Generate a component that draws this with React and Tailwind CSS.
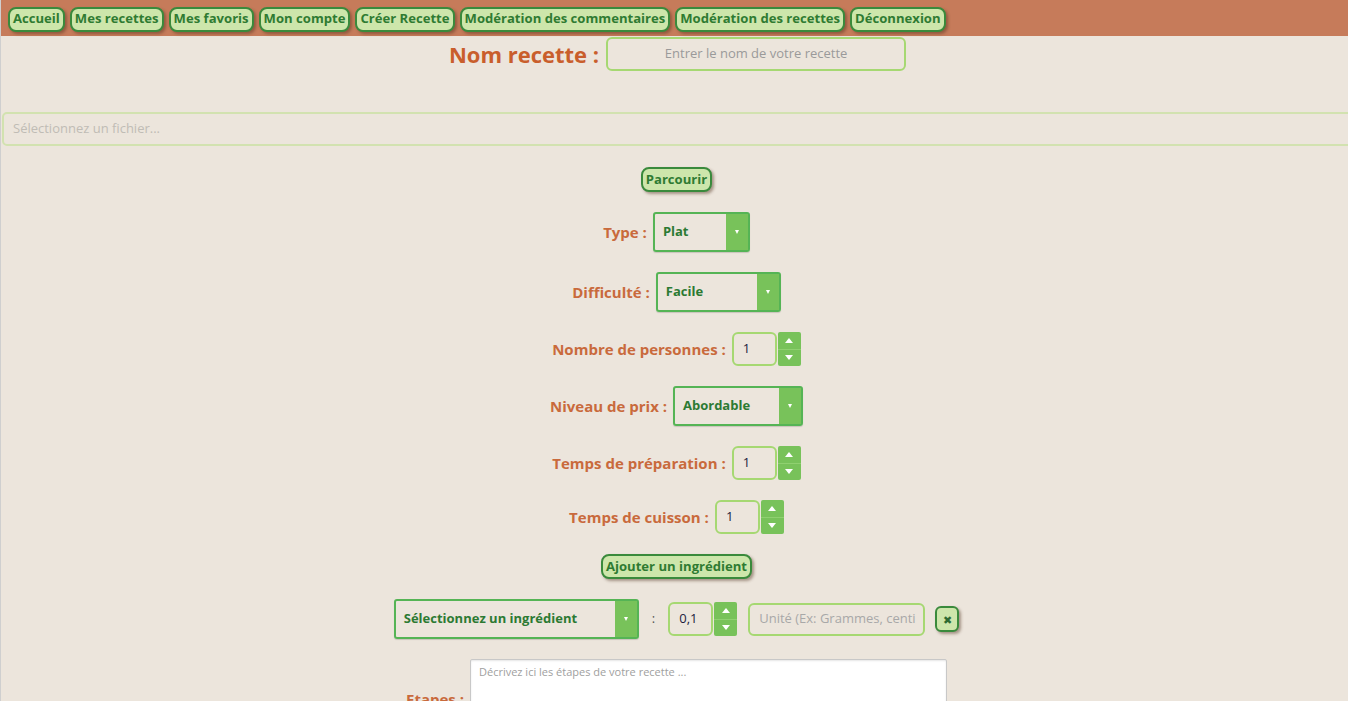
import React from 'react';

const font = { fontFamily: '"Open Sans", "Liberation Sans", sans-serif' };

const navItems = [
  'Accueil',
  'Mes recettes',
  'Mes favoris',
  'Mon compte',
  'Créer Recette',
  'Modération des commentaires',
  'Modération des recettes',
  'Déconnexion',
];

const GreenButton = ({ children, className = '' }) => (
  <button
    className={`h-[25px] px-[3px] rounded-[8px] border-2 border-[#3a8a3c] bg-[#cde6ab] text-[#2f7b32] text-[13.1px] font-bold leading-none shadow-[2px_2px_3px_rgba(80,50,30,0.45)] whitespace-nowrap ${className}`}
  >
    {children}
  </button>
);

const Label = ({ children }) => (
  <span className="text-[15px] font-bold text-[#c96a3c] whitespace-nowrap">{children}</span>
);

const FakeSelect = ({ value, width }) => (
  <div
    className="flex h-[40px] border-2 border-[#55b455] rounded-[3px] shadow-[0_1px_1px_rgba(0,0,0,0.15)]"
    style={{ width }}
  >
    <div className="flex-1 flex items-center pl-[8px] text-[13px] font-bold text-[#2c7a33]">{value}</div>
    <div className="w-[22px] bg-[#78c25a] flex items-center justify-center">
      <span className="w-0 h-0 border-l-[2.5px] border-r-[2.5px] border-t-[4px] border-l-transparent border-r-transparent border-t-white" />
    </div>
  </div>
);

const Spinner = () => (
  <div className="w-[23px] h-[34px] bg-[#78c25a] rounded-[2px] flex flex-col">
    <div className="flex-1 flex items-center justify-center border-b border-[#8fd070]">
      <span className="w-0 h-0 border-l-[4px] border-r-[4px] border-b-[5px] border-l-transparent border-r-transparent border-b-white" />
    </div>
    <div className="flex-1 flex items-center justify-center">
      <span className="w-0 h-0 border-l-[4px] border-r-[4px] border-t-[5px] border-l-transparent border-r-transparent border-t-white" />
    </div>
  </div>
);

const NumberField = ({ value }) => (
  <div className="flex items-center gap-px">
    <div className="w-[45px] h-[34px] border-2 border-[#a6d872] rounded-[6px] flex items-center pl-[9px] text-[13px] text-[#1c1c3c]">
      {value}
    </div>
    <Spinner />
  </div>
);

const Row = ({ label, children }) => (
  <div className="flex items-center justify-center gap-[6px]">
    <Label>{label}</Label>
    {children}
  </div>
);

export default function App() {
  return (
    <div className="min-h-screen bg-[#ece5dc] border-l border-[#cfcfcf] pb-10" style={font}>
      <nav className="h-[36px] bg-[#c67b5a] flex items-center gap-[5px] pl-[7px] pt-[2px]">
        {navItems.map((item) => (
          <GreenButton key={item}>{item}</GreenButton>
        ))}
      </nav>

      <div className="flex items-center justify-center gap-[7px] pl-[6px] pt-px">
        <span className="text-[22px] font-bold text-[#c95e2c]">Nom recette :</span>
        <div className="w-[300px] h-[34px] border-2 border-[#a6d872] rounded-[6px] flex items-center justify-center text-[13px] text-[#9a9a9a]">
          Entrer le nom de votre recette
        </div>
      </div>

      <div className="overflow-hidden mt-[41px]">
        <div className="ml-px w-[calc(100%+10px)] h-[34px] border-2 border-[#d2e2b0] rounded-[5px] flex items-center pl-[9px] text-[13px] text-[#c0bcb5]">
          Sélectionnez un fichier...
        </div>
      </div>

      <div className="flex flex-col items-center gap-[20px] mt-[21px] pl-[4px]">
        <GreenButton>Parcourir</GreenButton>
        <Row label="Type :">
          <FakeSelect value="Plat" width={97} />
        </Row>
        <Row label="Difficulté :">
          <FakeSelect value="Facile" width={125} />
        </Row>
        <Row label="Nombre de personnes :">
          <NumberField value="1" />
        </Row>
        <Row label="Niveau de prix :">
          <FakeSelect value="Abordable" width={130} />
        </Row>
        <Row label="Temps de préparation :">
          <NumberField value="1" />
        </Row>
        <Row label="Temps de cuisson :">
          <NumberField value="1" />
        </Row>
        <GreenButton>Ajouter un ingrédient</GreenButton>

        <div className="flex items-center">
          <FakeSelect value="Sélectionnez un ingrédient" width={245} />
          <span className="mx-[13px] text-[13px] text-[#555]">:</span>
          <NumberField value="0,1" />
          <div className="ml-[11px] w-[177px] h-[33px] border-2 border-[#a6d872] rounded-[6px] flex items-center pl-[9px] text-[13px] text-[#a8a8a8] whitespace-nowrap overflow-hidden">
            Unité (Ex: Grammes, centi
          </div>
          <button className="ml-[10px] w-[24px] h-[26px] rounded-[6px] border-2 border-[#3a8a3c] bg-[#cde6ab] text-[#2f6b32] text-[11px] leading-none flex items-center justify-center shadow-[2px_2px_3px_rgba(80,50,30,0.45)]">
            ✖
          </button>
        </div>

        <div className="flex items-center gap-[6px]">
          <Label>Etapes :</Label>
          <div className="w-[477px] h-[80px] bg-white border border-[#c8c8c8] rounded-[2px] shadow-[inset_0_1px_2px_rgba(0,0,0,0.1)] px-[8px] py-[4px] text-[11px] text-[#a0a0a0]">
            Décrivez ici les étapes de votre recette ...
          </div>
        </div>
      </div>
    </div>
  );
}
